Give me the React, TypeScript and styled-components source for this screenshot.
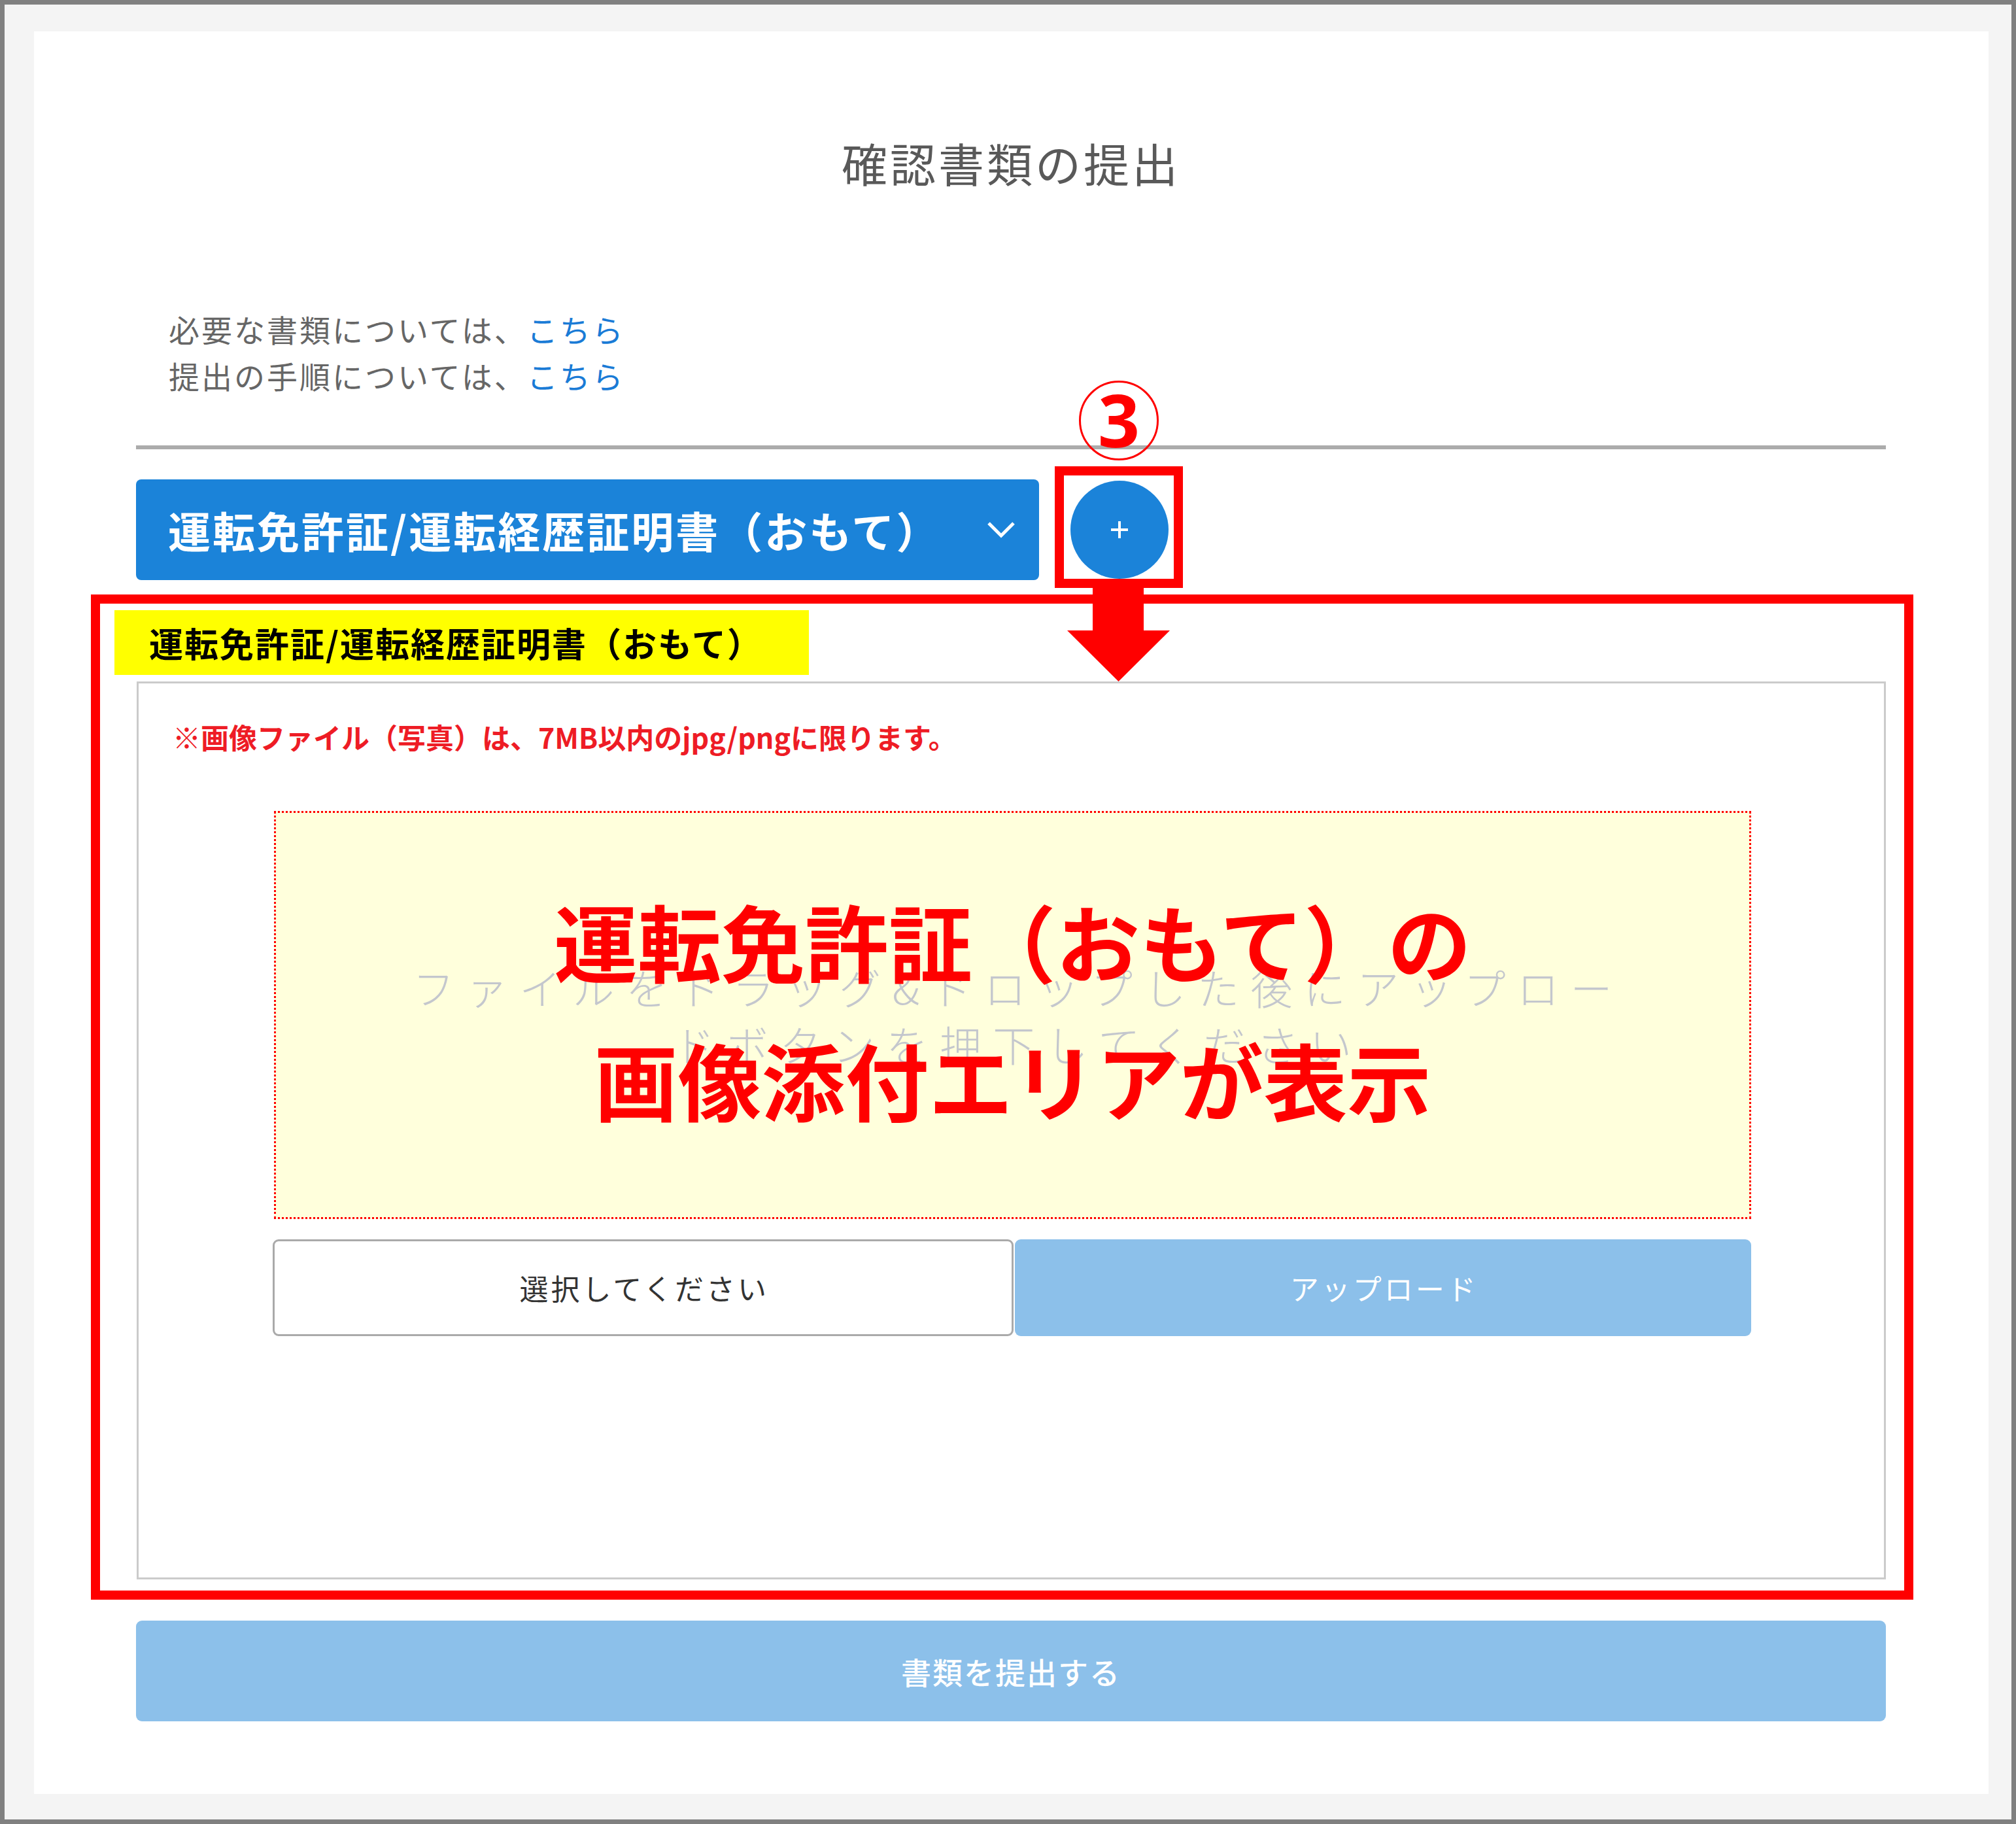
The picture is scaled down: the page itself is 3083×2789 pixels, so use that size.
import React from "react";
import styled, { createGlobalStyle } from "styled-components";

const GlobalStyle = createGlobalStyle`
  html, body {
    margin: 0;
    padding: 0;
  }
  body {
    font-family: "Noto Sans CJK JP", "Noto Sans", sans-serif;
    color: #333;
  }
  * {
    box-sizing: border-box;
  }
`;

const Frame = styled.div`
  width: 3083px;
  height: 2789px;
  border: 7px solid #808080;
  background: #f4f4f4;
  padding: 41px 35px 39px 45px;
  display: flex;
`;

const Card = styled.main`
  flex: 1;
  background: #fff;
  padding: 166px 157px 0 156px;
  display: flex;
  flex-direction: column;
`;

const Title = styled.h1`
  margin: 0;
  font-size: 70px;
  line-height: 70px;
  font-weight: 400;
  letter-spacing: 4px;
  text-align: center;
  color: #595959;
`;

const Info = styled.div`
  margin-top: 183px;
  padding-left: 50px;
  font-size: 47px;
  line-height: 71px;
  letter-spacing: 3px;
  color: #666;
`;

const InfoLink = styled.a`
  color: #1a7bd6;
  text-decoration: none;
`;

const Divider = styled.hr`
  margin: 72px 0 0;
  border: none;
  height: 6px;
  background: #acacac;
`;

const SelectRow = styled.div`
  margin-top: 46px;
  display: flex;
  align-items: center;
  column-gap: 48px;
`;

const DocSelect = styled.div`
  width: 1381px;
  height: 154px;
  border-radius: 8px;
  background: #1b83d9;
  color: #fff;
  display: flex;
  align-items: center;
  justify-content: space-between;
  padding: 0 36px 0 49px;
  font-size: 65px;
  font-weight: 700;
  letter-spacing: 3px;
`;

const AddWrap = styled.div`
  position: relative;
  width: 150px;
  height: 150px;
`;

const AddButton = styled.button`
  width: 150px;
  height: 150px;
  border-radius: 50%;
  border: none;
  background: #1b83d9;
  display: flex;
  align-items: center;
  justify-content: center;
  padding: 0;
`;

const HighlightBox = styled.div`
  position: absolute;
  left: -24px;
  top: -22px;
  width: 196px;
  height: 186px;
  border: 14px solid #ff0000;
`;

const StepMark = styled.div`
  position: absolute;
  left: 13px;
  top: -153px;
  width: 122px;
  height: 122px;
  border: 3px solid #ff0000;
  border-radius: 50%;
  display: flex;
  align-items: center;
  justify-content: center;
  color: #ff0000;
  font-family: "Noto Sans", "Liberation Sans", sans-serif;
  font-size: 112px;
  font-weight: 700;
  line-height: 1;
  padding-bottom: 4px;
`;

const DownArrow = styled.svg`
  position: absolute;
  left: -5px;
  top: 164px;
  z-index: 2;
`;

const RedFrame = styled.section`
  margin: 22px -42px 0 -69px;
  border: 14px solid #ff0000;
  padding: 10px 28px 17px 22px;
`;

const YellowLabel = styled.div`
  width: 1062px;
  height: 99px;
  background: #ffff00;
  color: #000;
  display: flex;
  align-items: center;
  padding-left: 53px;
  font-size: 52px;
  font-weight: 700;
  letter-spacing: 2px;
`;

const Panel = styled.div`
  margin: 10px 0 0 34px;
  border: 3px solid #cbcbcb;
  padding: 60px 0 369px;
`;

const Note = styled.p`
  margin: 0 0 0 52px;
  font-size: 43px;
  line-height: 43px;
  font-weight: 700;
  color: #ee1c25;
`;

const DropZone = styled.div`
  position: relative;
  margin: 92px 0 0 207px;
  width: 2259px;
  height: 624px;
  border: 3px dotted #ff0000;
  background: #ffffdc;
  display: flex;
  flex-direction: column;
  align-items: center;
  justify-content: center;
`;

const Placeholder = styled.div`
  font-size: 64px;
  line-height: 87px;
  font-weight: 300;
  letter-spacing: 17.5px;
  padding-left: 17px;
  color: #c4c7cd;
  text-align: center;
`;

const Overlay = styled.div`
  position: absolute;
  inset: 0;
  display: flex;
  flex-direction: column;
  align-items: center;
  justify-content: center;
  padding-bottom: 16px;
  color: #ff0000;
  font-size: 128px;
  line-height: 212px;
  font-weight: 700;
  white-space: nowrap;
`;

const ButtonRow = styled.div`
  margin: 31px 0 0 205px;
  width: 2261px;
  display: flex;
  column-gap: 2px;
`;

const FileButton = styled.button<{ primary?: boolean }>`
  flex: 1;
  height: 148px;
  border-radius: 9px;
  border: ${(p) => (p.primary ? "none" : "3px solid #aaaaaa")};
  background: ${(p) => (p.primary ? "#8cc0ea" : "#fff")};
  color: ${(p) => (p.primary ? "#fff" : "#333")};
  font-family: inherit;
  font-size: 44px;
  letter-spacing: 4px;
  padding: 0 0 0 4px;
`;

const SubmitButton = styled.button`
  margin-top: 32px;
  height: 154px;
  width: 100%;
  border: none;
  border-radius: 9px;
  background: #8cc0ea;
  color: #fff;
  font-family: inherit;
  font-size: 46px;
  font-weight: 500;
  letter-spacing: 2px;
`;

const docName = "運転免許証/運転経歴証明書（おもて）";

export default function App() {
  return (
    <>
      <GlobalStyle />
      <Frame>
        <Card>
          <Title>確認書類の提出</Title>
          <Info>
            <div>
              必要な書類については、<InfoLink href="#">こちら</InfoLink>
            </div>
            <div>
              提出の手順については、<InfoLink href="#">こちら</InfoLink>
            </div>
          </Info>
          <Divider />
          <SelectRow>
            <DocSelect>
              <span>{docName}</span>
              <svg width="44" height="26" viewBox="0 0 44 26">
                <polyline
                  points="3,3 22,22 41,3"
                  fill="none"
                  stroke="#fff"
                  strokeWidth="5"
                />
              </svg>
            </DocSelect>
            <AddWrap>
              <StepMark>3</StepMark>
              <AddButton>
                <svg width="30" height="30" viewBox="0 0 30 30">
                  <path d="M15 2V28M2 15H28" stroke="#fff" strokeWidth="4" />
                </svg>
              </AddButton>
              <HighlightBox />
              <DownArrow width="157" height="143" viewBox="0 0 157 143">
                <polygon
                  points="39,0 117,0 117,65 157,65 78.5,143 0,65 39,65"
                  fill="#ff0000"
                />
              </DownArrow>
            </AddWrap>
          </SelectRow>
          <RedFrame>
            <YellowLabel>{docName}</YellowLabel>
            <Panel>
              <Note>※画像ファイル（写真）は、7MB以内のjpg/pngに限ります。</Note>
              <DropZone>
                <Placeholder>
                  <div>ファイルをドラッグ&amp;ドロップした後にアップロー</div>
                  <div>ドボタンを押下してください</div>
                </Placeholder>
                <Overlay>
                  <div>運転免許証（おもて）の</div>
                  <div>画像添付エリアが表示</div>
                </Overlay>
              </DropZone>
              <ButtonRow>
                <FileButton>選択してください</FileButton>
                <FileButton primary>アップロード</FileButton>
              </ButtonRow>
            </Panel>
          </RedFrame>
          <SubmitButton>書類を提出する</SubmitButton>
        </Card>
      </Frame>
    </>
  );
}
